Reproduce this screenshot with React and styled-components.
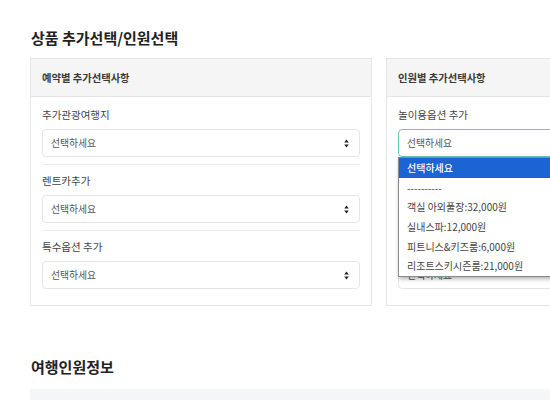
import React from "react";
import styled, { createGlobalStyle } from "styled-components";

const GlobalStyle = createGlobalStyle`
  body {
    margin: 0;
    overflow: hidden;
    background: #fff;
    font-family: "Noto Sans CJK KR", "Noto Sans", sans-serif;
    color: #333;
  }
`;

const Page = styled.div`
  width: 698px;
  padding: 0 30px;
`;

const SectionTitle = styled.h2`
  margin: ${(p) => p.$top}px 0 0 1px;
  font-size: 15px;
  font-weight: 700;
  line-height: 22px;
  color: #222;
`;

const Row = styled.div`
  display: flex;
  gap: 14px;
  margin-top: 9px;
`;

const Panel = styled.div`
  width: 342px;
  border: 1px solid #e6e6e6;
  background: #fff;
`;

const PanelHeader = styled.div`
  height: 37px;
  display: flex;
  align-items: center;
  padding: 0 11px;
  background: #f5f5f5;
  border-bottom: 1px solid #e6e6e6;
  font-size: 10.3px;
  font-weight: 700;
  color: #3a3a3a;
`;

const PanelBody = styled.div`
  padding: 11px 11px 16px;
`;

const Field = styled.div`
  position: relative;
  padding-top: ${(p) => (p.$first ? 0 : 9)}px;
  padding-bottom: ${(p) => (p.$last ? 0 : 7)}px;
  border-bottom: ${(p) => (p.$last ? "none" : "1px solid #ececec")};
`;

const Label = styled.div`
  font-size: 10.5px;
  line-height: 14px;
  color: #444;
  margin-bottom: 7px;
`;

const SelectBox = styled.div`
  height: 28px;
  box-sizing: border-box;
  display: flex;
  align-items: center;
  justify-content: space-between;
  padding: 0 10px 0 8px;
  border: 1px solid ${(p) => (p.$focused ? "#6cc6c0" : "#e6e6e6")};
  border-radius: 4px;
  font-size: 9.8px;
  color: #555;
  background: #fff;
`;

const Arrows = () => (
  <svg width="5" height="9" viewBox="0 0 5 9">
    <path d="M2.5 0.5 L4.8 3.6 H0.2 Z M2.5 8.5 L4.8 5.4 H0.2 Z" fill="#222" />
  </svg>
);

const Dropdown = styled.ul`
  position: absolute;
  left: 0;
  right: 0;
  top: 100%;
  margin: -7px 0 0;
  padding: 0;
  list-style: none;
  background: #fff;
  border: 1px solid #8a8a8a;
  box-shadow: 1px 2px 4px rgba(0, 0, 0, 0.3);
  z-index: 5;
`;

const Option = styled.li`
  height: 19.6px;
  display: flex;
  align-items: center;
  padding: 0 8px;
  font-size: 10px;
  font-weight: ${(p) => (p.$active ? 500 : 400)};
  color: ${(p) => (p.$active ? "#fff" : "#444")};
  background: ${(p) => (p.$active ? "#1c64d4" : "#fff")};
`;

const GreyBox = styled.div`
  margin-top: 11px;
  height: 60px;
  background: #f5f6f8;
`;

const leftFields = ["추가관광여행지", "렌트카추가", "특수옵션 추가"];
const rightFields = ["놀이용옵션 추가", "식사옵션 추가", "기타옵션 추가"];
const options = [
  "----------",
  "객실 아외풀장:32,000원",
  "실내스파:12,000원",
  "피트니스&키즈룸:6,000원",
  "리조트스키시즌룸:21,000원",
];

function OptionPanel({ title, fields, open }) {
  return (
    <Panel>
      <PanelHeader>{title}</PanelHeader>
      <PanelBody>
        {fields.map((f, i) => (
          <Field key={f} $first={i === 0} $last={i === fields.length - 1}>
            <Label>{f}</Label>
            <SelectBox $focused={open && i === 0}>
              <span>선택하세요</span>
              <Arrows />
            </SelectBox>
            {open && i === 0 && (
              <Dropdown>
                <Option $active>선택하세요</Option>
                {options.map((o) => (
                  <Option key={o}>{o}</Option>
                ))}
              </Dropdown>
            )}
          </Field>
        ))}
      </PanelBody>
    </Panel>
  );
}

export default function App() {
  return (
    <>
      <GlobalStyle />
      <Page>
        <SectionTitle $top={27}>상품 추가선택/인원선택</SectionTitle>
        <Row>
          <OptionPanel title="예약별 추가선택사항" fields={leftFields} />
          <OptionPanel title="인원별 추가선택사항" fields={rightFields} open />
        </Row>
        <SectionTitle $top={50}>여행인원정보</SectionTitle>
        <GreyBox />
      </Page>
    </>
  );
}
